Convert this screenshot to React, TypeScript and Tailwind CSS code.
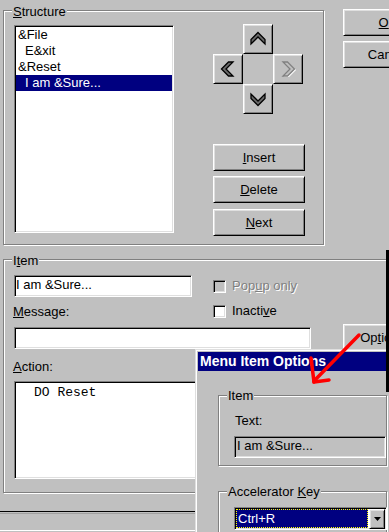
import React from "react";

// win95-ish bevels
const raised =
  "border border-t-white border-l-white border-r-black border-b-black shadow-[inset_1px_1px_0_#dfdfdf,inset_-1px_-1px_0_#808080]";
const sunken =
  "border border-t-[#808080] border-l-[#808080] border-r-white border-b-white shadow-[inset_1px_1px_0_#000,inset_-1px_-1px_0_#dfdfdf]";
const etched = "border border-[#808080] shadow-[inset_1px_1px_0_#fff,1px_1px_0_#fff]";

function GroupBox({
  label,
  className = "",
  labelClass = "-top-[7px]",
  children,
}: {
  label: React.ReactNode;
  className?: string;
  labelClass?: string;
  children?: React.ReactNode;
}) {
  return (
    <div className={`relative shrink-0 ${etched} ${className}`}>
      <span className={`absolute left-[8px] px-[1px] bg-[#c0c0c0] leading-[16px] ${labelClass}`}>{label}</span>
      {children}
    </div>
  );
}

function Btn({ className = "", children }: { className?: string; children: React.ReactNode }) {
  return (
    <div className={`${raised} shrink-0 h-[27px] flex items-center justify-center bg-[#c0c0c0] whitespace-nowrap ${className}`}>
      {children}
    </div>
  );
}

function Chevron({ rot, disabled }: { rot: number; disabled?: boolean }) {
  const pts = "8,1.5 15,8.5 15,13 8,6 1,13 1,8.5";
  return (
    <svg width="16" height="16" viewBox="0 0 16 16">
      {disabled && (
        <g transform="translate(1 1)">
          <g transform={`rotate(${rot} 8 8)`}>
            <polygon points={pts} fill="#fff" stroke="#fff" strokeWidth="1" />
          </g>
        </g>
      )}
      <g transform={`rotate(${rot} 8 8)`}>
        <polygon
          points={pts}
          fill={disabled ? "#c0c0c0" : "#6a6a6a"}
          stroke={disabled ? "#808080" : "#000"}
          strokeWidth="1.3"
          strokeLinejoin="miter"
        />
      </g>
    </svg>
  );
}

function ArrowBtn({ rot, disabled }: { rot: number; disabled?: boolean }) {
  return (
    <div className={`${raised} w-[30px] h-[30px] flex items-center justify-center bg-[#c0c0c0]`}>
      <Chevron rot={rot} disabled={disabled} />
    </div>
  );
}

function Check({ disabled, children }: { disabled?: boolean; children: React.ReactNode }) {
  return (
    <div className="flex items-start h-[16px]">
      <div className={`${sunken} mt-[2px] w-[13px] h-[13px] shrink-0 ${disabled ? "bg-[#c0c0c0]" : "bg-white"}`} />
      <span
        className={`ml-[6px] leading-[16px] ${
          disabled ? "text-[#808080] [text-shadow:1px_1px_0_#fff]" : ""
        }`}
      >
        {children}
      </span>
    </div>
  );
}

const structureItems = [
  { text: "&File", indent: false },
  { text: "E&xit", indent: true },
  { text: "&Reset", indent: false },
  { text: "I am &Sure...", indent: true, selected: true },
];

export default function App() {
  return (
    <div className="relative w-[389px] h-[532px] overflow-hidden bg-[#c0c0c0] text-[13px] leading-[16px] text-black font-['Liberation_Sans',Arial,sans-serif]">
      {/* Structure + OK/Cancel */}
      <div className="flex items-start pt-[9px]">
        <GroupBox label={<><u>S</u>tructure</>} className="ml-[3px] mt-[1px] w-[321px] h-[235px]">
          <div className="flex items-start pl-[10px] pt-[13px]">
            <div className={`${sunken} mt-[1px] w-[160px] h-[208px] bg-white p-[1px] shrink-0`}>
              {structureItems.map((it, i) => (
                <div
                  key={i}
                  className={`h-[16px] leading-[16px] whitespace-pre ${it.indent ? "pl-[9px]" : "pl-[2px]"} ${
                    it.selected ? "bg-[#000080] text-white" : ""
                  }`}
                >
                  {it.text}
                </div>
              ))}
            </div>
            <div className="ml-[39px] flex flex-col">
              <div className="grid grid-cols-[30px_30px_30px] grid-rows-[30px_30px_30px]">
                <div />
                <ArrowBtn rot={0} />
                <div />
                <ArrowBtn rot={-90} />
                <div />
                <ArrowBtn rot={90} disabled />
                <div />
                <ArrowBtn rot={180} />
                <div />
              </div>
              <Btn className="mt-[30px] w-[92px]">
                <span><u>I</u>nsert</span>
              </Btn>
              <Btn className="mt-[5px] w-[92px]">
                <span><u>D</u>elete</span>
              </Btn>
              <Btn className="mt-[6px] w-[92px]">
                <span><u>N</u>ext</span>
              </Btn>
            </div>
          </div>
        </GroupBox>
        <div className="ml-[19px] flex flex-col gap-[5px]">
          <Btn className="w-[90px]">
            <span><u>O</u>K</span>
          </Btn>
          <Btn className="w-[90px]">Cancel</Btn>
        </div>
      </div>

      {/* Item group */}
      <GroupBox label={<>I<u>t</u>em</>} className="ml-[3px] mt-[14px] w-[420px] h-[234px]">
        <div className="pl-[10px]">
          <div className="flex items-start pt-[15px]">
            <div className="flex flex-col w-[178px] shrink-0">
              <div className={`${sunken} h-[22px] bg-white pl-[1px] leading-[18px] whitespace-nowrap`}>
                I am &amp;Sure...
              </div>
              <div className="mt-[7px] -ml-[1px]">
                <u>M</u>essage:
              </div>
            </div>
            <div className="ml-[21px] flex flex-col pt-[3px]">
              <Check disabled>
                Pop<u className="decoration-[#808080]">u</u>p only
              </Check>
              <div className="mt-[9px]">
                <Check>
                  Inacti<u>v</u>e
                </Check>
              </div>
            </div>
          </div>
          <div className="flex items-start mt-[4px]">
            <div className={`${sunken} shrink-0 mt-[3px] w-[297px] h-[22px] bg-white`} />
            <Btn className="ml-[32px] w-[90px]">
              <span>Op<u>t</u>ions...</span>
            </Btn>
          </div>
          <div className="mt-[8px] -ml-[1px]">
            <u>A</u>ction:
          </div>
          <div className={`${sunken} mt-[6px] w-[297px] h-[98px] bg-white pl-[19px] pt-[2px]`}>
            <span className="font-['Liberation_Mono',monospace] text-[13px] leading-[16px]">DO Reset</span>
          </div>
        </div>
      </GroupBox>

      {/* bottom separator lines */}
      <div className="mt-[18px] h-[1px] bg-black" />
      <div className="mt-[1px] h-[1px] bg-[#a0a0a0]" />
      <div className="mt-[16px] h-[1px] bg-white" />

      {/* Menu Item Options dialog, lying over the form */}
      <div className="absolute left-[195px] top-[349px] w-[200px] h-[190px] bg-[#c0c0c0] p-[2px] border border-t-[#dfdfdf] border-l-[#dfdfdf] border-r-black border-b-black shadow-[inset_1px_1px_0_#fff,inset_-1px_-1px_0_#808080]">
        <div className="h-[19px] bg-[#000080] text-white font-bold text-[14px] pl-[2px] leading-[19px] whitespace-nowrap">
          Menu Item Options
        </div>
        <div className="pl-[20px]">
          <GroupBox label="Item" labelClass="-top-[8px]" className="mt-[24px] w-[169px] h-[71px]">
            <div className="pl-[16px] pt-[17px]">Text:</div>
            <div
              className={`${sunken} mt-[7px] ml-[15px] w-[152px] h-[22px] bg-[#c0c0c0] pl-[2px] leading-[18px] whitespace-nowrap`}
            >
              I am &amp;Sure...
            </div>
          </GroupBox>
          <GroupBox
            label={<>Accelerator <u>K</u>ey</>}
            labelClass="-top-[8px]"
            className="mt-[25px] w-[169px] h-[60px]"
          >
            <div className="pl-[15px] pt-[15px]">
              <div className={`${sunken} w-[153px] h-[23px] bg-white p-[1px] flex`}>
                <div className="flex-1 bg-[#000080] border border-dotted border-[#ffff00] text-white pl-[1px] leading-[17px]">
                  Ctrl+R
                </div>
                <div className={`${raised} ml-[1px] w-[16px] h-[20px] flex items-center justify-center bg-[#c0c0c0]`}>
                  <svg width="7" height="4" viewBox="0 0 7 4">
                    <polygon points="0,0 7,0 3.5,4" fill="#000" />
                  </svg>
                </div>
              </div>
            </div>
          </GroupBox>
        </div>
      </div>

      {/* dark edge at right */}
      <div className="absolute left-[386px] top-[250px] w-[3px] h-[142px] bg-black" />

      {/* red annotation arrow */}
      <svg className="absolute left-0 top-0 pointer-events-none" width="389" height="532" viewBox="0 0 389 532">
        <g stroke="#ff0000" strokeWidth="3.5" strokeLinecap="round" fill="none">
          <line x1="359" y1="335" x2="314" y2="381" />
          <line x1="311" y1="358" x2="314" y2="382" />
          <line x1="314" y1="382" x2="329" y2="380" />
        </g>
      </svg>
    </div>
  );
}
